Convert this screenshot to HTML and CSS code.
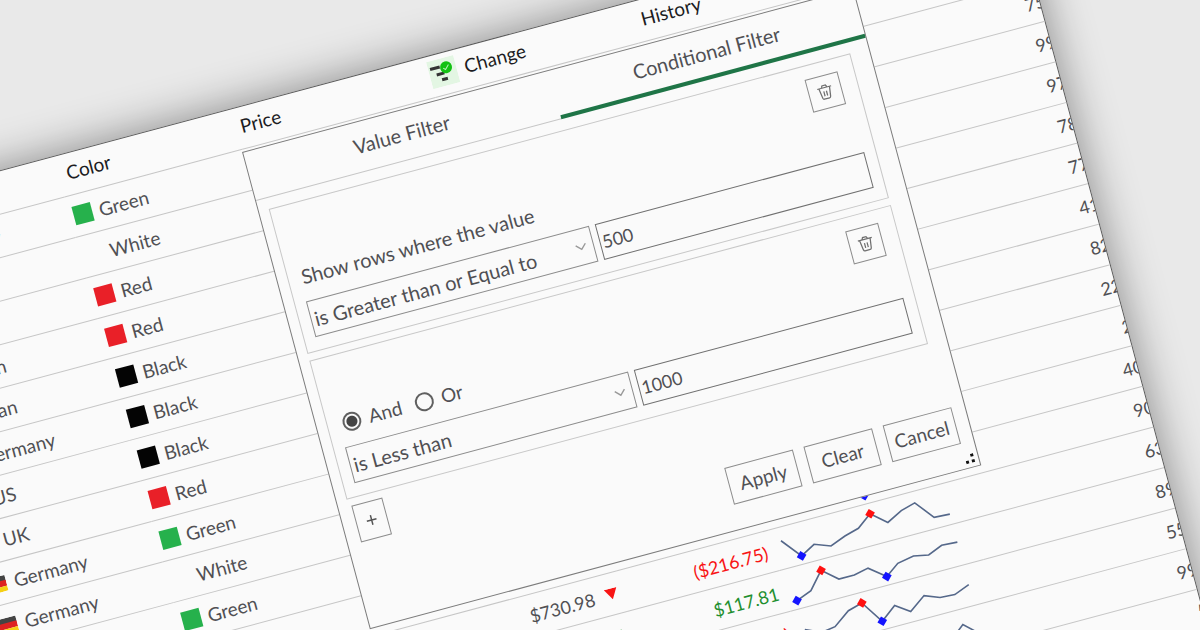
FILE: index.html
```html
<!DOCTYPE html>
<html lang="en">
<head>
<meta charset="utf-8">
<title>Conditional Filter</title>
<link rel="stylesheet" href="styles.css">
</head>
<body>
<main class="sheet">
  <table class="data">
    <colgroup>
      <col class="col-country"><col class="col-color"><col class="col-price"><col class="col-arrow"><col class="col-change"><col class="col-history"><col class="col-total">
    </colgroup>
    <thead>
      <tr>
        <th></th>
        <th class="th-color">Color</th>
        <th class="th-price">Price</th>
        <th colspan="2"><span class="sorted"><svg class="filter-icon" viewBox="0 0 28 28" aria-hidden="true"><rect width="28" height="28" fill="#e3f6e3"/><path d="M2 8h10M7 15h8M11 21h6" stroke="#333" stroke-width="3"/><circle cx="18" cy="10" r="6" fill="#13c113"/><path d="M15 10l2 2 4-4" stroke="#b9f0b9" stroke-width="1" fill="none"/></svg>Change</span></th>
        <th class="th-history">History</th>
        <th></th>
      </tr>
    </thead>
    <tbody id="rows"></tbody>
  </table>

  <section class="popup">
    <div class="tabs">
      <button class="tab" type="button">Value Filter</button>
      <button class="tab active" type="button">Conditional Filter</button>
    </div>
    <div class="conditions">
      <fieldset class="condition">
        <button class="icon-button" type="button" aria-label="Delete condition"><svg viewBox="0 0 20 20"><path d="M2 5h16M7 4.500l1-2h4l1 2M4 5.500l1.500 10.500q.3 1.500 1.500 1.500h6q1.200 0 1.500-1.500l1.500-10.500M8.500 9v5.500M11.500 9v5.500"/></svg></button>
        <label class="caption" for="op1">Show rows where the value</label>
        <div class="fields">
          <div class="picker">
            <select id="op1"><option>is Greater than or Equal to</option><option>is Less than</option></select>
            <svg viewBox="0 0 12 8" aria-hidden="true"><path d="M1 1l5 5 5-5"/></svg>
          </div>
          <input class="value" type="text" value="500" aria-label="First value">
        </div>
      </fieldset>
      <fieldset class="condition second">
        <button class="icon-button" type="button" aria-label="Delete condition"><svg viewBox="0 0 20 20"><path d="M2 5h16M7 4.500l1-2h4l1 2M4 5.500l1.500 10.500q.3 1.500 1.500 1.500h6q1.200 0 1.500-1.500l1.500-10.500M8.500 9v5.500M11.500 9v5.500"/></svg></button>
        <div class="logic">
          <label><input type="radio" name="logic" checked>And</label>
          <label><input type="radio" name="logic">Or</label>
        </div>
        <div class="fields">
          <div class="picker">
            <select id="op2" aria-label="Second operator"><option>is Less than</option><option>is Greater than or Equal to</option></select>
            <svg viewBox="0 0 12 8" aria-hidden="true"><path d="M1 1l5 5 5-5"/></svg>
          </div>
          <input class="value" type="text" value="1000" aria-label="Second value">
        </div>
      </fieldset>
      <button class="add" type="button" aria-label="Add condition"><svg viewBox="0 0 12 12"><path d="M6 1v10M1 6h10"/></svg></button>
    </div>
    <div class="actions">
      <button type="button">Apply</button>
      <button type="button">Clear</button>
      <button type="button">Cancel</button>
    </div>
    <svg class="grip" viewBox="0 0 10 10" aria-hidden="true"><path d="M0 6h3v3H0zM6 6h3v3H6zM6 0h3v3H6z"/></svg>
  </section>
</main>
<script src="rows.js"></script>
</body>
</html>
```
FILE: styles.css
```css
* {
  box-sizing: border-box;
}

body {
  margin: 0;
  height: 100vh;
  overflow: hidden;
  position: relative;
  background: #e9e9e9;
  color: #505054;
  font: 19px/24px Lato, "Open Sans", sans-serif;
}

button,
input,
select {
  margin: 0;
  padding: 0;
  font: inherit;
  color: inherit;
  background: transparent;
  border: 1px solid #8c8c8c;
  border-radius: 0;
}

.sheet {
  position: absolute;
  left: -134px;
  top: 107px;
  width: 1186px;
  overflow: hidden;
  background: #fafafa;
  border: 1px solid #5c5c5c;
  box-shadow: 0 0 44px rgba(0, 0, 0, 0.42);
  transform-origin: 376px 45px;
  transform: rotate(-15deg);
}

.data {
  width: 1196px;
  table-layout: fixed;
  border-collapse: separate;
  border-spacing: 0;
}

.col-country { width: 192px; }
.col-color { width: 184px; }
.col-price { width: 200px; }
.col-arrow { width: 52px; }
.col-change { width: 158px; }
.col-history { width: 200px; }
.col-total { width: 210px; }

th,
td {
  height: 42px;
  padding: 0;
  border-bottom: 1px solid #c6c6c6;
  vertical-align: middle;
  white-space: nowrap;
}

th {
  padding-bottom: 3px;
  color: #1c1c22;
  font-weight: 400;
  text-align: left;
}

.th-color { padding-left: 8px; }
.th-price { padding-left: 4px; }
.th-history { padding-left: 9px; }

.sorted,
.country,
.swatch-label,
.price {
  display: flex;
  align-items: center;
}

.sorted { gap: 8px; }

.filter-icon {
  width: 28px;
  height: 28px;
}

.country {
  gap: 8px;
  padding-left: 12px;
}

.flag {
  width: 24px;
  height: 16px;
}

.swatch-label {
  gap: 7px;
  padding-left: 4px;
}

.swatch {
  width: 19px;
  height: 19px;
}

.green { background: #26b14c; }
.red { background: #e92028; }
.black { background: #040404; }
.white { background: #fafafa; }

.price,
.change,
.total,
.value {
  font-size: 18px;
}

.price {
  justify-content: flex-end;
  gap: 11px;
  padding-right: 4px;
}

.arrow {
  width: 13px;
  height: 11px;
}

.change {
  padding-right: 7px;
  text-align: right;
}

.up { color: #1f8f2f; fill: #1f8f2f; }
.down { color: #f81414; fill: #f81414; }

.history { padding-left: 9px; }

.spark {
  display: block;
  width: 170px;
  height: 41px;
  overflow: visible;
}

.spark polyline {
  fill: none;
  stroke: #55688a;
  stroke-width: 1.6;
}

.low { fill: #1414ff; }
.high { fill: #ff1010; }

.total {
  padding-right: 6px;
  text-align: right;
}

.popup {
  position: absolute;
  left: 375px;
  top: 44px;
  width: 633px;
  height: 494px;
  display: flex;
  flex-direction: column;
  background: #fafafa;
  border: 1px solid #7c7c7c;
}

.tabs {
  display: grid;
  grid-template-columns: 1fr 1fr;
  font-size: 20px;
}

.tab {
  height: 50px;
  padding-bottom: 4px;
  border: 0;
  border-bottom: 1px solid #c6c6c6;
}

.tab.active {
  padding-bottom: 1px;
  border-bottom: 4px solid #1f7547;
}

.conditions {
  flex: 1;
  display: flex;
  flex-direction: column;
  gap: 7px;
  padding: 11px 19px 0 10px;
}

.condition {
  margin: 0;
  padding: 13px 11px 13px;
  min-width: 0;
  display: flex;
  flex-direction: column;
  border: 1px solid #c8c8c8;
}

.icon-button {
  align-self: flex-end;
  width: 34px;
  height: 34px;
  margin-right: 5px;
  display: grid;
  place-items: center;
}

.icon-button svg {
  width: 18px;
  height: 18px;
  fill: none;
  stroke: #707070;
  stroke-width: 1.4;
}

.caption {
  padding: 14px 2px 13px;
  font-size: 20px;
}

.logic {
  display: flex;
  gap: 14px;
  padding: 9px 4px 12px;
}

.logic label {
  display: flex;
  align-items: center;
  gap: 8px;
}

.logic input {
  appearance: none;
  width: 19px;
  height: 19px;
  border: 2px solid #606060;
  border-radius: 50%;
}

.logic input:checked {
  background: radial-gradient(circle, #444 5px, transparent 6px);
}

.fields {
  display: grid;
  grid-template-columns: 293px 1fr;
  gap: 6px;
}

.picker {
  display: grid;
  align-items: center;
}

.picker > * {
  grid-area: 1 / 1;
}

.picker select {
  appearance: none;
  width: 100%;
  height: 37px;
  padding: 0 3px;
  font-size: 20px;
}

.picker svg {
  justify-self: end;
  width: 12px;
  height: 8px;
  margin-right: 7px;
  fill: none;
  stroke: #999;
  stroke-width: 1.4;
  pointer-events: none;
}

.value {
  width: 100%;
  height: 37px;
  padding: 0 2px;
  border-color: #707070;
}

.add {
  width: 32px;
  height: 38px;
  margin-left: 3px;
  display: grid;
  place-items: center;
}

.add svg {
  width: 12px;
  height: 12px;
  fill: none;
  stroke: #555;
  stroke-width: 1.5;
}

.actions {
  display: flex;
  justify-content: flex-end;
  gap: 11px;
  padding: 0 13px 25px;
}

.actions button {
  width: 71px;
  height: 38px;
}

.grip {
  position: absolute;
  right: 3px;
  bottom: 3px;
  width: 10px;
  height: 10px;
  fill: #111;
}
```
FILE: rows.js
```js
const rows = [
  { country: "Germany", color: "Green", total: "75" },
  { country: "US", color: "White", total: "75" },
  { country: "Japan", color: "Red", total: "99" },
  { country: "Japan", color: "Red", total: "97" },
  { country: "Japan", color: "Black", total: "78" },
  { country: "Germany", color: "Black", total: "77" },
  { country: "US", color: "Black", total: "41" },
  { country: "UK", color: "Red", total: "82" },
  { country: "Germany", color: "Green", total: "22" },
  { country: "Germany", color: "White", total: "2" },
  { country: "Germany", color: "Green", total: "40" },
  { country: "US", color: "Red", total: "90", points: [[77, 20], [92, 33], [108, 20]], low: [92, 33] },
  { country: "US", color: "Red", total: "63", price: "$730.98", change: "($216.75)", dir: "down",
    points: [[0, 13], [16, 33], [31, 25], [47, 31], [63, 25], [78, 21], [93, 10], [108, 23], [124, 15], [139, 11], [154, 30], [170, 31]], low: [16, 33], high: [93, 10] },
  { country: "US", color: "Red", total: "89", price: "$821.40", change: "$117.81", dir: "up",
    points: [[0, 33], [16, 27], [31, 10], [46, 23], [62, 23], [77, 20], [93, 33], [107, 23], [124, 20], [139, 23], [154, 17], [170, 18]], low: [0, 33], low2: [93, 33], high: [31, 10] },
  { country: "US", color: "Red", total: "55", price: "$610.25", change: "($94.10)", dir: "down",
    points: [[0, 21], [16, 28], [30, 26], [47, 14], [62, 10], [77, 33], [93, 21], [107, 31], [124, 19], [139, 25], [154, 26], [170, 20]], low: [77, 33], high: [62, 10] },
  { country: "US", color: "Red", total: "99", points: [[124, 33], [139, 27], [154, 15], [170, 30]] },
  { country: "US", color: "Red", total: "5" },
  { country: "US", color: "Red", total: "12" }
];

const diamond = (name, p) =>
  p ? `<path class="${name}" d="M${p[0] - 5} ${p[1]}l5-5 5 5-5 5z"/>` : "";

const flag = (country) => country === "Germany"
  ? '<svg class="flag" viewBox="0 0 24 16"><path fill="#444" d="M0 0h24v6H0z"/><path fill="#dd2222" d="M0 5h24v6H0z"/><path fill="#f5cf15" d="M0 11h24v5H0z"/></svg>'
  : '<span class="flag"></span>';

const arrow = (dir) =>
  `<svg class="arrow ${dir}" viewBox="0 0 13 11"><path d="${dir === "down" ? "M0 0h13L6.500 11z" : "M0 11h13L6.500 0z"}"/></svg>`;

const spark = (r) => r.points
  ? `<svg class="spark" viewBox="0 0 170 41"><polyline points="${r.points.join(" ")}"/>${diamond("low", r.low)}${diamond("low", r.low2)}${diamond("high", r.high)}</svg>`
  : "";

document.getElementById("rows").innerHTML = rows.map((r) => `<tr>
  <td><div class="country">${flag(r.country)}${r.country}</div></td>
  <td><div class="swatch-label"><span class="swatch ${r.color.toLowerCase()}"></span>${r.color}</div></td>
  <td colspan="2">${r.price ? `<div class="price">${r.price}${arrow(r.dir)}</div>` : ""}</td>
  <td class="change ${r.dir || ""}">${r.change || ""}</td>
  <td class="history">${spark(r)}</td>
  <td class="total">${r.total}</td>
</tr>`).join("");
```
